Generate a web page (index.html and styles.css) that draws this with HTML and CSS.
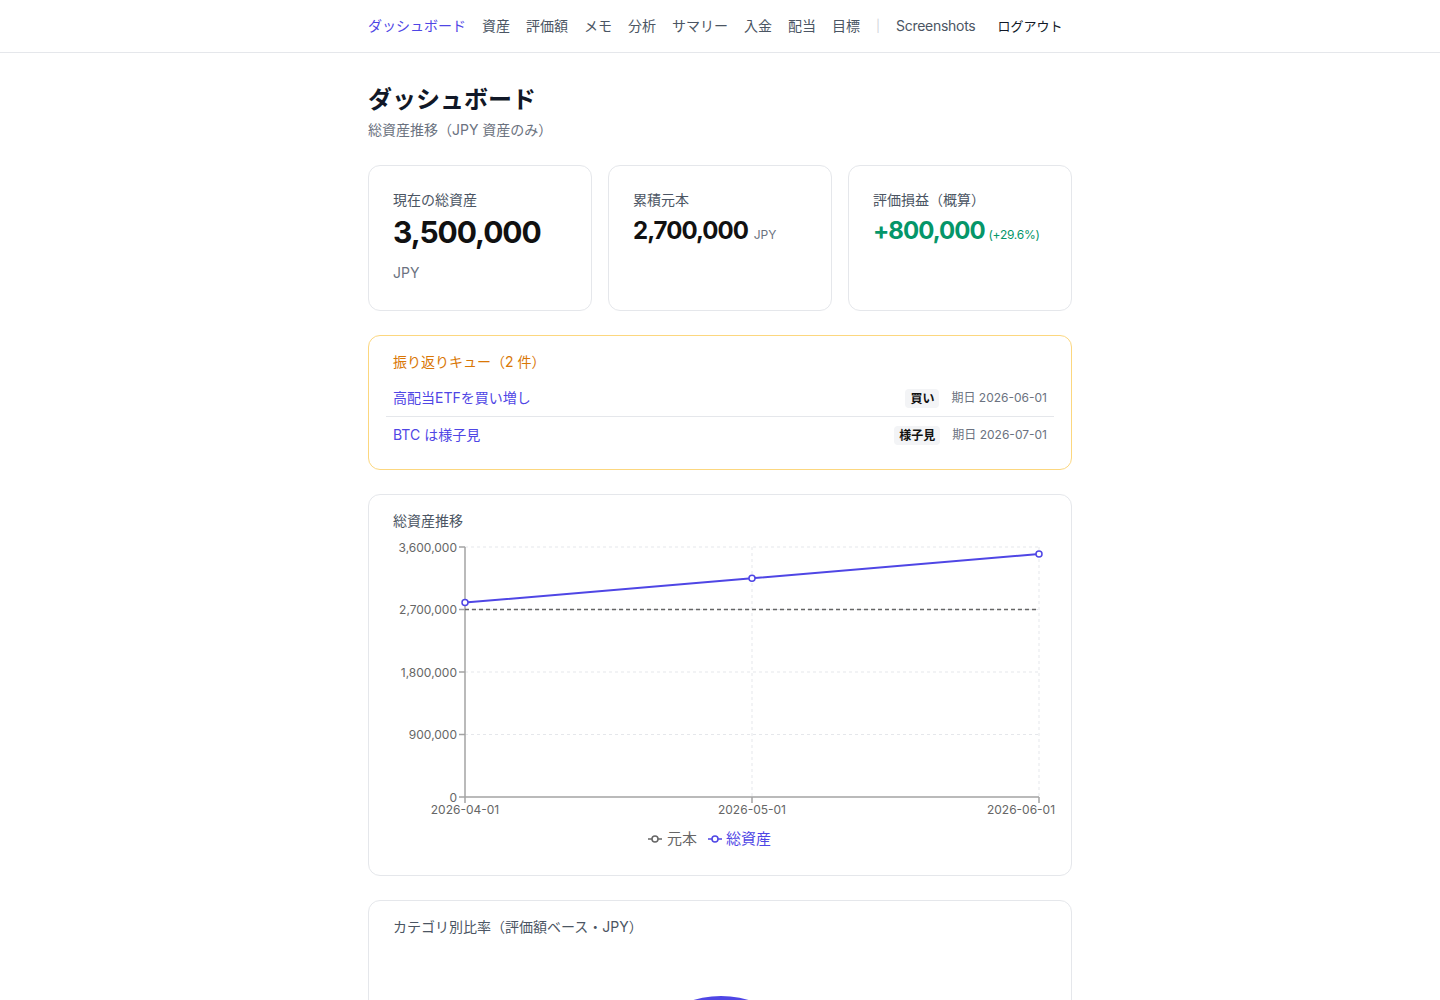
FILE: index.html
```html
<!DOCTYPE html>
<html lang="ja">
<head>
<meta charset="utf-8">
<title>ダッシュボード</title>
<link rel="stylesheet" href="styles.css">
</head>
<body>
<header class="topbar">
  <nav class="nav">
    <a class="nav-link active">ダッシュボード</a>
    <a class="nav-link">資産</a>
    <a class="nav-link">評価額</a>
    <a class="nav-link">メモ</a>
    <a class="nav-link">分析</a>
    <a class="nav-link">サマリー</a>
    <a class="nav-link">入金</a>
    <a class="nav-link">配当</a>
    <a class="nav-link">目標</a>
    <span class="nav-sep">|</span>
    <a class="nav-link latin">Screenshots</a>
    <a class="nav-logout">ログアウト</a>
  </nav>
</header>

<main class="main">
  <h1 class="page-title">ダッシュボード</h1>
  <p class="page-sub">総資産推移（JPY 資産のみ）</p>

  <section class="stats">
    <div class="card stat">
      <div class="stat-label">現在の総資産</div>
      <div class="stat-big">3,500,000</div>
      <div class="stat-unit-block">JPY</div>
    </div>
    <div class="card stat">
      <div class="stat-label">累積元本</div>
      <div class="stat-value"><span class="num">2,700,000</span> <span class="stat-unit">JPY</span></div>
    </div>
    <div class="card stat">
      <div class="stat-label">評価損益（概算）</div>
      <div class="stat-value gain"><span class="num">+800,000</span> <span class="stat-pct">(+29.6%)</span></div>
    </div>
  </section>

  <section class="card queue">
    <div class="queue-title">振り返りキュー（2 件）</div>
    <ul class="queue-list">
      <li class="queue-row">
        <a class="queue-link">高配当ETFを買い増し</a>
        <div class="queue-meta"><span class="badge">買い</span><span class="due">期日 2026-06-01</span></div>
      </li>
      <li class="queue-row">
        <a class="queue-link">BTC は様子見</a>
        <div class="queue-meta"><span class="badge">様子見</span><span class="due">期日 2026-07-01</span></div>
      </li>
    </ul>
  </section>

  <section class="card chart-card">
    <div class="card-title">総資産推移</div>
    <svg class="chart" width="654" height="320" viewBox="0 0 654 320">
      <g class="grid" stroke="#e5e7eb" stroke-dasharray="3 3" stroke-width="1">
        <line x1="72" y1="8" x2="646" y2="8"/>
        <line x1="72" y1="70.5" x2="646" y2="70.5"/>
        <line x1="72" y1="133" x2="646" y2="133"/>
        <line x1="72" y1="195.5" x2="646" y2="195.5"/>
        <line x1="359" y1="8" x2="359" y2="258"/>
        <line x1="646" y1="8" x2="646" y2="258"/>
      </g>
      <g stroke="#a3a3a3" stroke-width="1.5">
        <line x1="72" y1="8" x2="72" y2="258"/>
        <line x1="72" y1="258" x2="646" y2="258"/>
        <line x1="66" y1="8" x2="72" y2="8"/>
        <line x1="66" y1="70.5" x2="72" y2="70.5"/>
        <line x1="66" y1="133" x2="72" y2="133"/>
        <line x1="66" y1="195.5" x2="72" y2="195.5"/>
        <line x1="66" y1="258" x2="72" y2="258"/>
        <line x1="72" y1="258" x2="72" y2="264"/>
        <line x1="359" y1="258" x2="359" y2="264"/>
        <line x1="646" y1="258" x2="646" y2="264"/>
      </g>
      <g class="tick" fill="#666" font-size="12" text-anchor="end">
        <text x="64" y="12.5">3,600,000</text>
        <text x="64" y="75">2,700,000</text>
        <text x="64" y="137.5">1,800,000</text>
        <text x="64" y="200">900,000</text>
        <text x="64" y="262.5">0</text>
      </g>
      <g class="tick" fill="#666" font-size="12" text-anchor="middle">
        <text x="72" y="275">2026-04-01</text>
        <text x="359" y="275">2026-05-01</text>
        <text x="628" y="275">2026-06-01</text>
      </g>
      <line x1="72" y1="70.5" x2="646" y2="70.5" stroke="#666" stroke-width="1.5" stroke-dasharray="4 3"/>
      <polyline points="72,63.6 359,39.3 646,15" fill="none" stroke="#4f46e5" stroke-width="2"/>
      <g fill="#fff" stroke="#4f46e5" stroke-width="1.5">
        <circle cx="72" cy="63.6" r="3"/>
        <circle cx="359" cy="39.3" r="3"/>
        <circle cx="646" cy="15" r="3"/>
      </g>
      <g class="legend" font-size="15">
        <line x1="255" y1="300" x2="269" y2="300" stroke="#666" stroke-width="1.5"/>
        <circle cx="262" cy="300" r="3" fill="#fff" stroke="#666" stroke-width="1.5"/>
        <text x="274" y="305" fill="#666">元本</text>
        <line x1="315" y1="300" x2="329" y2="300" stroke="#4f46e5" stroke-width="1.5"/>
        <circle cx="322" cy="300" r="3" fill="#fff" stroke="#4f46e5" stroke-width="1.5"/>
        <text x="333" y="305" fill="#4f46e5">総資産</text>
      </g>
    </svg>
  </section>

  <section class="card pie-card">
    <div class="card-title">カテゴリ別比率（評価額ベース・JPY）</div>
    <svg class="pie" width="654" height="300" viewBox="0 0 654 300">
      <circle cx="328" cy="146" r="95" fill="#4f46e5"/>
    </svg>
  </section>
</main>
</body>
</html>
```

FILE: styles.css
```css
* { box-sizing: border-box; }

html, body {
  margin: 0;
  padding: 0;
  background: #ffffff;
}

body {
  font-family: Inter, "Noto Sans CJK JP", sans-serif;
  color: #111827;
  font-size: 14px;
}

a { text-decoration: none; cursor: pointer; }

.topbar {
  height: 53px;
  border-bottom: 1px solid #e5e7eb;
}

.nav {
  width: 704px;
  margin: 0 auto;
  height: 50px;
  display: flex;
  align-items: center;
  gap: 16px;
  font-size: 14px;
}

.nav-link {
  color: #4b5563;
}

.nav-link.latin {
  letter-spacing: -0.02em;
}

.nav-link.active {
  color: #4f46e5;
}

.nav-sep {
  color: #d1d5db;
  font-size: 12px;
}

.nav-logout {
  color: #111827;
  margin-left: 6px;
  font-size: 13px;
}

.main {
  width: 704px;
  margin: 0 auto;
  padding-top: 31px;
}

.page-title {
  margin: 0;
  font-size: 24px;
  line-height: 32px;
  font-weight: 700;
}

.page-sub {
  margin: 4px 0 0;
  font-size: 14px;
  line-height: 20px;
  color: #6b7280;
}

.card {
  background: #fff;
  border: 1px solid #e5e7eb;
  border-radius: 12px;
}

.stats {
  margin-top: 25px;
  display: grid;
  grid-template-columns: repeat(3, 1fr);
  gap: 16px;
}

.stat {
  padding: 24px;
  height: 146px;
}

.stat-label {
  font-size: 14px;
  line-height: 20px;
  color: #4b5563;
}

.stat-big {
  margin-top: 4px;
  font-size: 30px;
  line-height: 36px;
  font-weight: 700;
  color: #111;
  letter-spacing: -0.035em;
}

.stat-unit-block {
  margin-top: 13px;
  font-size: 14px;
  line-height: 20px;
  color: #6b7280;
}

.stat-value {
  margin-top: 5px;
  font-size: 24px;
  line-height: 32px;
  font-weight: 700;
  color: #111;
  white-space: nowrap;
}

.num {
  letter-spacing: -0.04em;
}

.stat-unit {
  font-size: 12px;
  font-weight: 400;
  color: #6b7280;
}

.stat-value.gain {
  color: #059669;
}

.stat-pct {
  font-size: 12px;
  font-weight: 400;
  color: #059669;
  letter-spacing: -0.02em;
  margin-left: -2px;
}

.queue {
  margin-top: 24px;
  border-color: #fcd77f;
  padding: 16px 24px 16px;
}

.queue-title {
  font-size: 14px;
  line-height: 20px;
  color: #d97706;
}

.queue-list {
  list-style: none;
  margin: 8px -7px 0;
  padding: 0;
}

.queue-row {
  display: flex;
  align-items: center;
  justify-content: space-between;
  padding: 8px 7px;
  line-height: 20px;
}

.queue-row + .queue-row {
  border-top: 1px solid #e5e7eb;
}

.queue-link {
  color: #4f46e5;
  font-size: 14px;
}

.queue-meta {
  display: flex;
  align-items: center;
  gap: 12px;
}

.badge {
  background: #f3f4f6;
  color: #111;
  font-size: 12px;
  font-weight: 600;
  line-height: 19px;
  padding: 0 5px;
  border-radius: 4px;
}

.due {
  font-size: 12px;
  color: #6b7280;
}

.chart-card {
  margin-top: 24px;
  padding: 16px 24px 16px;
}

.card-title {
  font-size: 14px;
  line-height: 20px;
  color: #4b5563;
}

.chart {
  display: block;
  margin-top: 8px;
  overflow: visible;
}

.tick, .legend {
  font-family: Inter, "Noto Sans CJK JP", sans-serif;
}

.pie-card {
  margin-top: 24px;
  padding: 16px 24px 16px;
}

.pie {
  display: block;
  margin-top: 8px;
}
```
